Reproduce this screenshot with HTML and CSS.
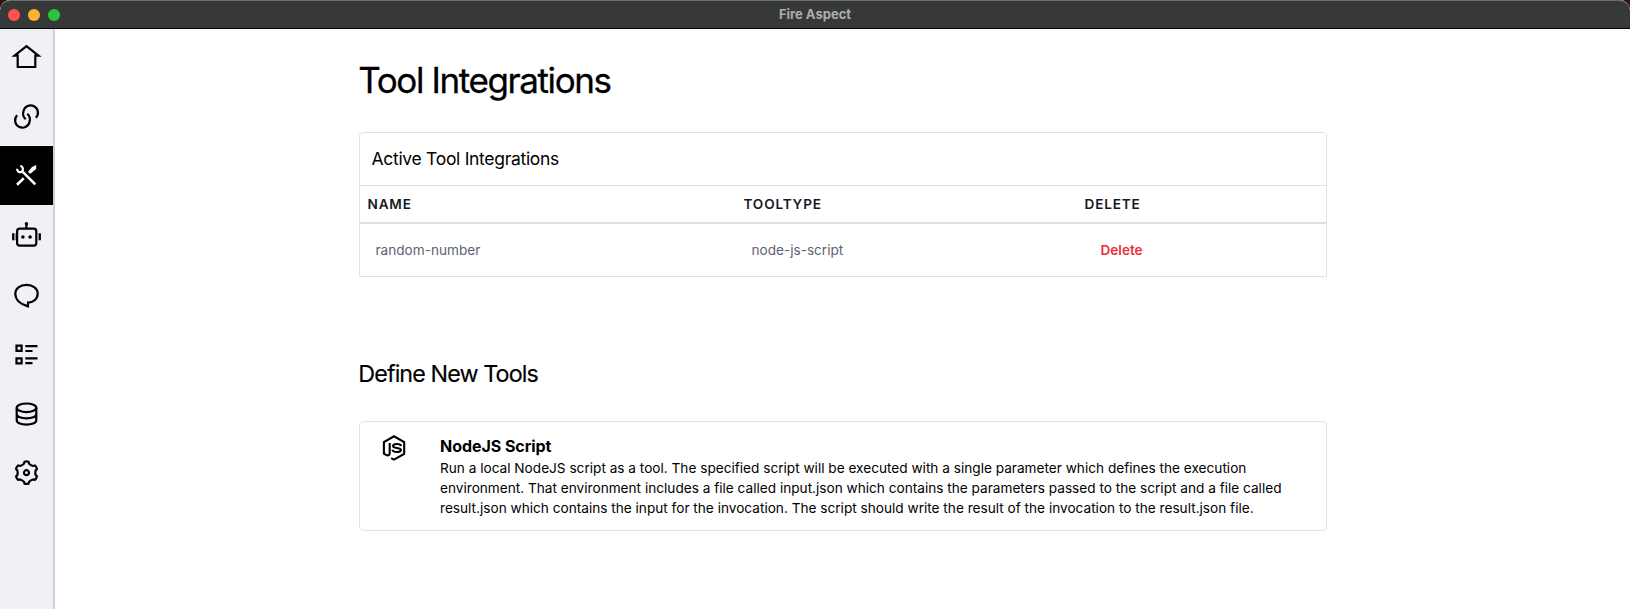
FILE: index.html
```
<!DOCTYPE html>
<html lang="en">
<head>
<meta charset="utf-8">
<title>Fire Aspect</title>
<link rel="stylesheet" href="styles.css">
</head>
<body>
<div class="window">
  <header class="titlebar">
    <div class="lights"><span class="light red"></span><span class="light amber"></span><span class="light green"></span></div>
    <span class="window-title">Fire Aspect</span>
  </header>
  <div class="body">
    <nav class="sidebar">
      <a class="item"><svg class="icon" viewBox="-0.5 -0.5 32 32"><path d="M7.2 14.2H4L16 4.7L28 14.2H24.8V25.5H7.2Z"/></svg></a>
      <a class="item"><svg class="icon" viewBox="-0.5 -0.5 32 32"><path d="M25.3 17.3A7.3 7.3 0 1 0 13 10.6C12 14 13 16.8 15.2 18.8M6.7 14.7A7.3 7.3 0 1 0 19 21.4C20 18 19 15.2 16.8 13.2"/></svg></a>
      <a class="item active"><svg class="icon" viewBox="-0.5 -0.5 32 32"><path d="M6.6 9.3C6.5 12.2 9 13.3 11.2 12.2C13.2 10.6 12.8 7.2 9.8 6.2"/><path class="handle" d="M11 11.2L24.8 24.9M13.3 18.8L6.5 25.2"/><path class="fill" d="M25.8 5.6L25.6 9.4L20.2 14L18.2 13.8L18 11.8L21.5 7.5Z"/></svg></a>
      <a class="item low"><svg class="icon" viewBox="-0.5 0 32 32"><rect x="6.6" y="9.7" width="19.2" height="17" rx="2.6"/><path d="M15.9 5V9.7M2.7 14.3V21.3M29.3 14.3V21.3"/><path class="faint" d="M4.6 14.3V21.3M27.4 14.3V21.3"/><circle class="fill" cx="15.9" cy="4.8" r="1.7"/><circle class="fill" cx="12.4" cy="18" r="1.8"/><circle class="fill" cx="19.6" cy="18" r="1.8"/></svg></a>
      <a class="item low"><svg class="icon" viewBox="-0.5 0 32 32"><path d="M17.5 24.6V28.4C10.5 26.5 4.8 22 4.8 15.8C4.8 10.5 9.5 6.9 16 6.9C22.5 6.9 27.2 10.4 27.2 15.6C27.2 20.8 23 24.6 17.5 24.6Z"/></svg></a>
      <a class="item low"><svg class="icon" viewBox="-0.5 0 32 32"><path d="M6 7.7H11.1V12.8H6ZM6 20.3H11.1V25.4H6ZM14.8 8.2H27M14.8 13H22M14.8 20.3H27M14.8 25.1H22"/></svg></a>
      <a class="item low"><svg class="icon" viewBox="-0.5 0 32 32"><ellipse cx="16" cy="10.8" rx="9.8" ry="4.3"/><path d="M6.2 10.8V23.2C6.2 29 25.8 29 25.8 23.2V10.8M6.2 17C6.2 22.8 25.8 22.8 25.8 17"/></svg></a>
      <a class="item low"><svg class="icon" viewBox="-16.5 -15.7 32 32"><path d="M-2-10.9Q0-11.6 2-10.9L2.6-9Q4.3-7.4 6.5-6.75L8.44-7.18Q10.1-5.8 10.44-3.72L9.1-2.25Q8.5 0 9.1 2.25L10.44 3.72Q10.1 5.8 8.44 7.18L6.5 6.75Q4.3 7.4 2.6 9L2 10.9Q0 11.6-2 10.9L-2.6 9Q-4.3 7.4-6.5 6.75L-8.44 7.18Q-10.1 5.8-10.44 3.72L-9.1 2.25Q-8.5 0-9.1-2.25L-10.44-3.72Q-10.1-5.8-8.44-7.18L-6.5-6.75Q-4.3-7.4-2.6-9Z"/><circle r="2.5"/></svg></a>
    </nav>
    <main class="main">
      <h1 class="heading">Tool Integrations</h1>
      <section class="panel">
        <h2 class="panel-title">Active Tool Integrations</h2>
        <div class="row head"><span>NAME</span><span>TOOLTYPE</span><span>DELETE</span></div>
        <div class="row data"><span>random-number</span><span>node-js-script</span><span class="delete">Delete</span></div>
      </section>
      <h2 class="subheading">Define New Tools</h2>
      <section class="card">
        <svg class="node" viewBox="0 0 24 28"><path d="M9.2 24.1L12 25.6L22.2 19.9V8.1L12 2.3L1.9 8.1V19.7L4.8 21.3Q7.7 21.8 7.7 19V9"/><path d="M19 12.1C18.8 9.5 11.2 9.2 11 12.1C11 15 19 12.8 19 16C19 18.8 10.7 18.6 10.5 15.7"/></svg>
        <div class="card-text">
          <h3 class="card-title">NodeJS Script</h3>
          <p class="copy">Run a local NodeJS script as a tool. The specified script will be executed with a single parameter which defines the execution<br>environment. That environment includes a file called input.json which contains the parameters passed to the script and a file called<br>result.json which contains the input for the invocation. The script should write the result of the invocation to the result.json file.</p>
        </div>
      </section>
    </main>
  </div>
</div>
</body>
</html>
```
FILE: styles.css
```
* { box-sizing: border-box; }
body { margin: 0; background: #32150f; color: #000; font-family: Inter, "Liberation Sans", sans-serif; }
h1, h2, h3, p { margin: 0; font-weight: 400; }
.window { height: 609px; display: flex; flex-direction: column; overflow: hidden; border-radius: 10px 10px 0 0; background: #fff; }
.titlebar { height: 29px; flex: none; display: grid; grid-template-columns: 1fr auto 1fr; align-items: center; background: #373938; border-top: 1px solid #6b6d6c; border-bottom: 1px solid #000; border-radius: 10px 10px 0 0; }
.lights { display: flex; gap: 8px; padding-left: 8px; }
.light { width: 12px; height: 12px; border-radius: 50%; }
.red { background: #ff5152; }
.amber { background: #fdb32f; }
.green { background: #28c63e; }
.window-title { font-size: 13px; font-weight: 700; line-height: 16px; padding-bottom: 2px; color: #acadac; }
.body { flex: 1; display: flex; min-height: 0; }
.sidebar { width: 55px; flex: none; background: #eff1f5; border-right: 2px solid #cbd0d9; display: flex; flex-direction: column; }
.item { height: 59px; flex: none; display: flex; align-items: center; justify-content: center; padding: 0 1px 1px 0; color: #000; }
.item:first-child { height: 58px; padding-bottom: 2px; }
.low { height: 59.5px; padding-bottom: 0; }
.active { background: #000; color: #fff; }
.icon { width: 32px; height: 32px; fill: none; stroke: currentColor; stroke-width: 2.2; }
.icon .fill { fill: currentColor; stroke: none; }
.icon .faint { stroke: #888; stroke-width: 1.6; }
.icon .handle { stroke-width: 2.6; }
.main { flex: 1; padding: 31px 303px 0 304px; }
.heading { margin-left: -0.7px; font-size: 35px; line-height: 40px; letter-spacing: -1.4px; -webkit-text-stroke: 0.3px; }
.panel { margin-top: 32px; border: 1px solid #e0e2e7; border-radius: 4px 4px 0 0; height: 145px; }
.panel-title { height: 53px; padding: 12px 11.5px; font-size: 17.5px; line-height: 28px; letter-spacing: -0.3px; border-bottom: 1px solid #e0e2e7; }
.row { display: grid; grid-template-columns: 376px 341px 1fr; font-size: 13.6px; line-height: 20px; }
.head { height: 38px; padding: 8px 7.5px 0; font-weight: 600; letter-spacing: 0.82px; color: #151a28; border-bottom: 2px solid #dcdfe4; }
.data { padding: 16px 15.5px; color: #5c6372; }
.delete { padding-left: 8px; color: #ea2f3d; font-weight: 600; font-size: 13.6px; }
.subheading { margin: 81px 0 0 -0.7px; font-size: 23.3px; line-height: 32px; letter-spacing: -0.9px; -webkit-text-stroke: 0.15px; }
.card { margin-top: 31px; height: 110px; display: flex; border: 1px solid #e0e2e7; border-radius: 4px; padding: 12px 22px; }
.node { width: 24px; height: 28px; flex: none; fill: none; stroke: #000; stroke-width: 2.1; }
.card-text { padding-left: 34px; white-space: nowrap; }
.card-title { font-size: 16px; font-weight: 700; line-height: 24px; letter-spacing: -0.05px; }
.copy { font-size: 13.64px; line-height: 20px; }
```
